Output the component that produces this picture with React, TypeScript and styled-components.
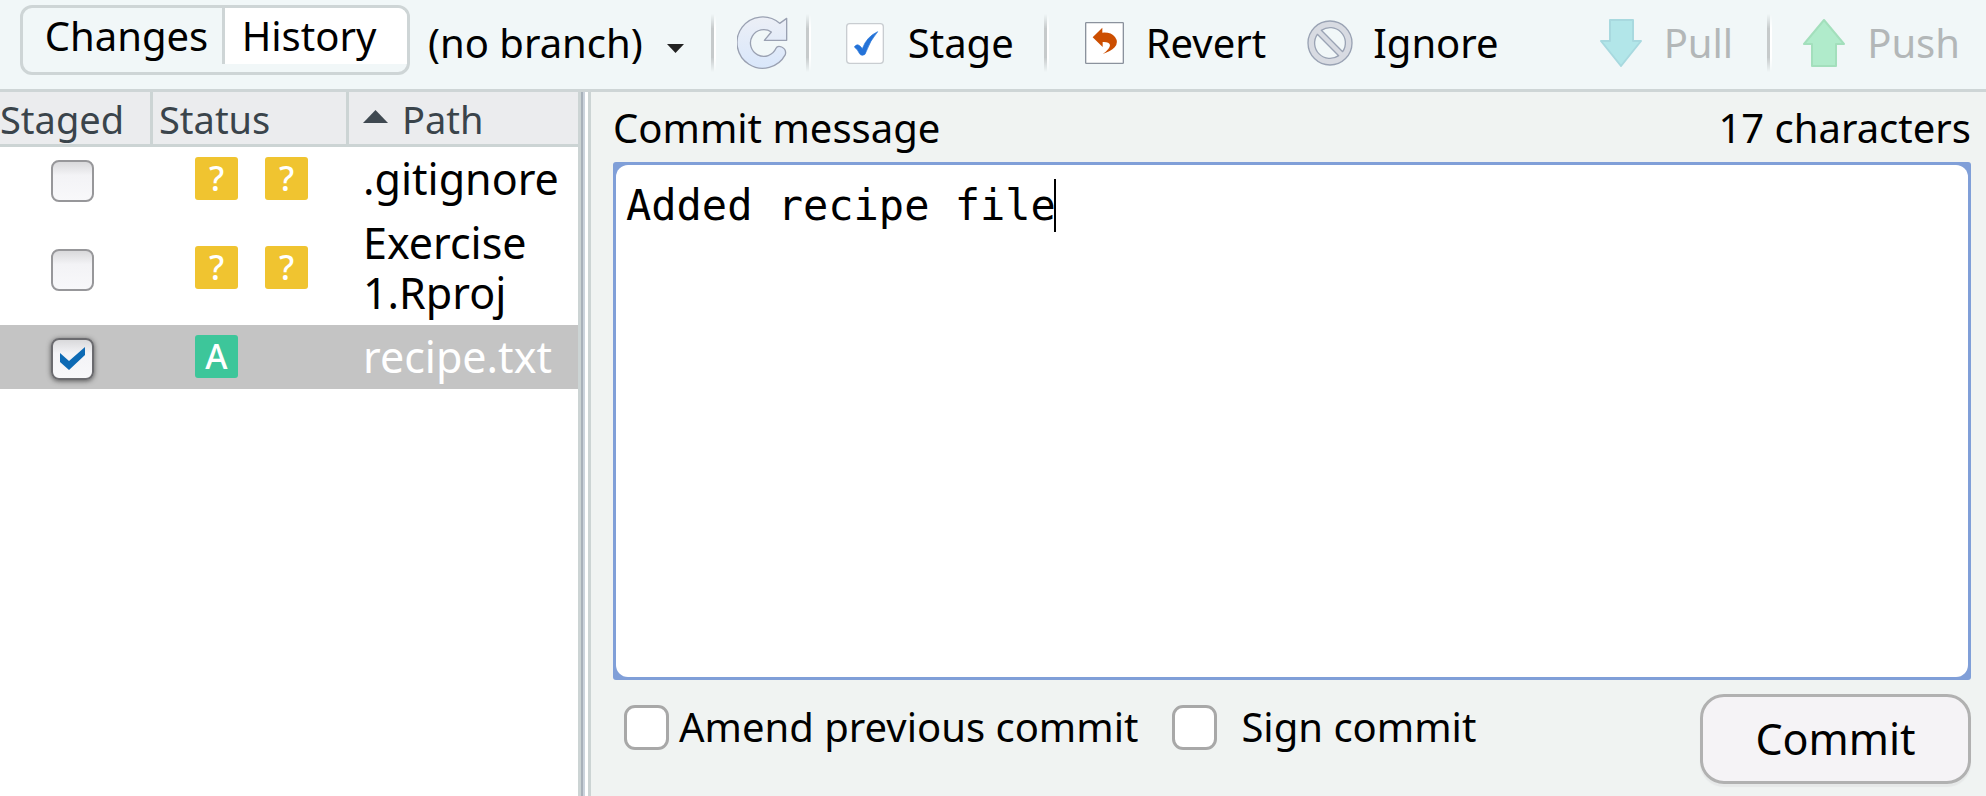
import React, { useState } from "react";
import styled, { createGlobalStyle, css } from "styled-components";

const GlobalStyle = createGlobalStyle`
  *, *::before, *::after { box-sizing: border-box; }
  body {
    margin: 0;
    background: #f0f3f2;
    color: #000;
    font-family: "Noto Sans", "Open Sans", sans-serif;
    font-size: 40px;
    line-height: 50px;
  }
  button, input, textarea { font: inherit; color: inherit; margin: 0; }
`;

const Window = styled.div`
  display: flex;
  flex-direction: column;
  min-height: 100vh;
`;

/* Toolbar */

const Toolbar = styled.header`
  display: flex;
  align-items: center;
  height: 92px;
  padding: 0 26px 3px 20px;
  background: #f1f7f8;
  border-bottom: 3px solid #ced5d6;
  white-space: nowrap;
`;

const ViewSwitch = styled.div`
  display: flex;
  align-items: flex-start;
  align-self: flex-start;
  flex: none;
  width: 390px;
  height: 70px;
  margin-top: 5px;
  border: 3px solid #ced5d6;
  border-radius: 12px;
  overflow: hidden;
`;

const ViewButton = styled.button<{ $raised?: boolean }>`
  height: 56px;
  padding: 0 0 0 8px;
  border: 0;
  background: none;
  flex: 0 0 199px;
  ${(p) =>
    p.$raised &&
    css`
      flex: 1;
      padding: 0 14px 0 0;
      background: #fff;
      border-left: 3px solid #ced5d6;
    `}
`;

const ToolButton = styled.button<{ $gap?: number }>`
  display: flex;
  align-items: center;
  gap: ${(p) => p.$gap ?? 24}px;
  flex: none;
  padding: 0;
  border: 0;
  background: none;
  svg { flex: none; display: block; }
  &:disabled { color: #b3b7b8; }
`;

const Separator = styled.span`
  flex: none;
  width: 5px;
  height: 58px;
  background: linear-gradient(90deg, #c6cacb 0 3px, #fff 3px);
  mask-image: linear-gradient(transparent, #000 25%, #000 75%, transparent);
`;

const Gap = styled.span<{ $size: number }>`
  flex: 0 1 ${(p) => p.$size}px;
`;

const Spacer = styled.span`
  flex: 1;
`;

/* Split view */

const Split = styled.main`
  display: flex;
  flex: 1;
`;

const FilePane = styled.section`
  flex: 0 0 578px;
  background: #fff;
`;

const Divider = styled.div`
  flex: 0 0 13px;
  background: linear-gradient(
    90deg,
    #ccd4d4 0 3px,
    #a8b1ba 3px 5px,
    #cbd3dc 5px 7px,
    #fff 7px 10px,
    #ccd4d4 10px
  );
`;

const FileTable = styled.table`
  width: 100%;
  table-layout: fixed;
  border-collapse: separate;
  border-spacing: 0;
`;

const HeadCell = styled.th<{ $width?: number; $indent?: number }>`
  width: ${(p) => (p.$width ? `${p.$width}px` : "auto")};
  height: 55px;
  padding: 2px 0 0 ${(p) => p.$indent ?? 0}px;
  background: #ebecee;
  border-bottom: 3px solid #ccd4d4;
  border-right: ${(p) => (p.$width ? "3px solid #ccd4d4" : "0")};
  color: #3a444b;
  font-size: 38px;
  font-weight: 400;
  text-align: left;
  white-space: nowrap;
  svg { margin-right: 14px; vertical-align: 11px; }
`;

const FileRow = styled.tr<{ $selected: boolean }>`
  font-size: 43px;
  ${(p) => p.$selected && "background: #c4c4c4; color: #fff;"}
`;

const Cell = styled.td<{ $indent: number }>`
  padding: 7px 0 7px ${(p) => p.$indent}px;
  vertical-align: middle;
`;

const Badges = styled.div`
  display: flex;
  gap: 27px;
  margin-bottom: 2px;
`;

const Badge = styled.span<{ $kind: string }>`
  width: 43px;
  height: 43px;
  border-radius: 3px;
  background: ${(p) => (p.$kind === "A" ? "#3dc69a" : "#f0c430")};
  color: #fff;
  font-size: 34px;
  font-weight: 500;
  line-height: 43px;
  text-align: center;
`;

const StageBox = styled.span`
  position: relative;
  display: block;
  width: 43px;
  height: 42px;
  margin-top: 4px;
  input {
    appearance: none;
    display: block;
    width: 100%;
    height: 100%;
    border: 2px solid #97979a;
    border-radius: 8px;
    background: linear-gradient(#d9d9db, #f3f3f6 35%, #f8f8fa);
  }
  input:checked {
    border-color: #6b6b6f;
    box-shadow: 0 1px 5px #555;
  }
  svg {
    position: absolute;
    inset: 0;
    pointer-events: none;
  }
`;

/* Commit form */

const CommitPane = styled.form`
  display: flex;
  flex-direction: column;
  flex: 1;
  min-width: 0;
  padding: 11px 15px 12px 22px;
`;

const MessageHeader = styled.div`
  display: flex;
  justify-content: space-between;
`;

const MessageFrame = styled.div`
  position: relative;
  display: flex;
  flex: 1;
  margin: 9px 0 14px;
  padding: 3px;
  border-radius: 3px;
  background: #809fd8;
  font-family: "DejaVu Sans Mono", monospace;
  font-size: 42px;
`;

const Message = styled.textarea`
  flex: 1;
  min-height: 200px;
  padding: 16px 10px;
  border: 0;
  border-radius: 12px;
  outline: 0;
  resize: none;
  background: #fff;
  caret-color: transparent;
`;

const Caret = styled.span`
  position: absolute;
  top: 17px;
  width: 2px;
  height: 53px;
  background: #000;
  pointer-events: none;
`;

const Actions = styled.div`
  display: flex;
  align-items: flex-start;
`;

const Option = styled.label<{ $gap: number }>`
  display: flex;
  align-items: center;
  gap: ${(p) => p.$gap}px;
  margin: 8px 23px 0 11px;
  input {
    appearance: none;
    width: 45px;
    height: 45px;
    border: 3px solid #a8a8a8;
    border-radius: 11px;
    background: #fff;
  }
`;

const CommitButton = styled.button`
  width: 271px;
  height: 90px;
  margin-left: auto;
  padding: 0;
  border: 3px solid #b1b1b1;
  border-radius: 24px;
  background: #f5f3f6;
  box-shadow: 0 3px 1px #e6e8e8;
  font-size: 43px;
`;

/* Icons */

const DropGlyph = styled.svg`
  margin-top: 10px;
`;

const DropIcon = () => (
  <DropGlyph width="17" height="9" viewBox="0 0 17 9">
    <path d="M0 0H17L8.500 9Z" fill="#222" />
  </DropGlyph>
);

const SortIcon = () => (
  <svg width="25" height="13" viewBox="0 0 25 13">
    <path d="M12.5 0L25 13H0Z" fill="#3f4951" />
  </svg>
);

const RefreshIcon = () => (
  <svg width="52" height="54" viewBox="50 45 156 162">
    <defs>
      <linearGradient id="refresh" x1="0" y1="0" x2="0" y2="1">
        <stop offset="0" stopColor="#eceff6" />
        <stop offset="1" stopColor="#d9e7fb" />
      </linearGradient>
    </defs>
    <path
      d="M199 52V118H132L153 93A40 40 0 1 0 167 142Q171 133 184 138Q199 145 195 161A77 77 0 1 1 178 67Z"
      fill="url(#refresh)"
      stroke="#9aa1b2"
      strokeWidth="4"
      strokeLinejoin="round"
    />
  </svg>
);

const StageIcon = () => (
  <svg width="38" height="41" viewBox="378 69 114 123">
    <rect x="380" y="71" width="110" height="119" rx="9" fill="#fff" stroke="#c9cdd1" strokeWidth="4" />
    <path
      d="M403 141Q411 129 421 139L427 146Q440 110 473 95Q450 122 438 156Q436 166 427 166Q421 166 418 160Q413 148 403 141Z"
      fill="#2372d8"
      stroke="#2372d8"
      strokeWidth="2"
    />
  </svg>
);

const RevertIcon = () => (
  <svg width="39" height="42" viewBox="74 63 117 126">
    <rect x="76" y="65" width="113" height="122" rx="2" fill="#fff" stroke="#8b929d" strokeWidth="4" />
    <path
      d="M97 109L126 80V95Q152 93 164 108Q176 124 163 139Q151 151 127 159Q149 144 149 132Q147 122 127 123V138Z"
      fill="#cc4e00"
    />
  </svg>
);

const IgnoreIcon = () => (
  <svg width="46" height="46" viewBox="745 62 138 138">
    <g stroke="#9aa3b4" strokeWidth="4" strokeLinejoin="round">
      <circle cx="814" cy="131" r="66" fill="#d8dbe2" />
      <path d="M788 93A46 46 0 0 1 852 157Z" fill="#f1f7f8" />
      <path d="M776 105A46 46 0 0 0 840 169Z" fill="#f1f7f8" />
    </g>
  </svg>
);

const PullIcon = () => (
  <svg width="42" height="48" viewBox="0 0 42 48">
    <path d="M10 1H33V22H41L21 47L1 22H10Z" fill="#b2e6e9" stroke="#a8d9df" strokeWidth="2" strokeLinejoin="round" />
  </svg>
);

const PushIcon = () => (
  <svg width="42" height="48" viewBox="0 0 42 48">
    <path d="M9 47H33V25H41L21 1L1 25H9Z" fill="#b0ebcb" stroke="#a3dfbc" strokeWidth="2" strokeLinejoin="round" />
  </svg>
);

const CheckMark = () => (
  <svg width="43" height="42" viewBox="0 0 43 42">
    <path d="M9 15L18 23L34 9V17L18 32L9 24Z" fill="#0d6ab4" />
  </svg>
);

type FileEntry = { path: string; status: string[]; staged: boolean };

const initialFiles: FileEntry[] = [
  { path: ".gitignore", status: ["?", "?"], staged: false },
  { path: "Exercise 1.Rproj", status: ["?", "?"], staged: false },
  { path: "recipe.txt", status: ["A"], staged: true },
];

export default function App() {
  const [files, setFiles] = useState(initialFiles);
  const [message, setMessage] = useState("Added recipe file");

  const toggle = (path: string) =>
    setFiles(files.map((f) => (f.path === path ? { ...f, staged: !f.staged } : f)));

  return (
    <Window>
      <GlobalStyle />
      <Toolbar>
        <ViewSwitch>
          <ViewButton>Changes</ViewButton>
          <ViewButton $raised>History</ViewButton>
        </ViewSwitch>
        <Gap $size={18} />
        <ToolButton>
          (no branch)
          <DropIcon />
        </ToolButton>
        <Gap $size={27} />
        <Separator />
        <Gap $size={21} />
        <ToolButton aria-label="Refresh">
          <RefreshIcon />
        </ToolButton>
        <Gap $size={17} />
        <Separator />
        <Gap $size={35} />
        <ToolButton>
          <StageIcon />
          Stage
        </ToolButton>
        <Gap $size={30} />
        <Separator />
        <Gap $size={36} />
        <ToolButton $gap={22}>
          <RevertIcon />
          Revert
        </ToolButton>
        <Gap $size={41} />
        <ToolButton $gap={20}>
          <IgnoreIcon />
          Ignore
        </ToolButton>
        <Spacer />
        <ToolButton disabled $gap={22}>
          <PullIcon />
          Pull
        </ToolButton>
        <Gap $size={34} />
        <Separator />
        <Gap $size={31} />
        <ToolButton disabled $gap={22}>
          <PushIcon />
          Push
        </ToolButton>
      </Toolbar>
      <Split>
        <FilePane>
          <FileTable>
            <thead>
              <tr>
                <HeadCell $width={153}>Staged</HeadCell>
                <HeadCell $width={196} $indent={6}>Status</HeadCell>
                <HeadCell $indent={14}>
                  <SortIcon />
                  Path
                </HeadCell>
              </tr>
            </thead>
            <tbody>
              {files.map((file) => (
                <FileRow key={file.path} $selected={file.path === "recipe.txt"}>
                  <Cell $indent={51}>
                    <StageBox>
                      <input
                        type="checkbox"
                        aria-label={`Stage ${file.path}`}
                        checked={file.staged}
                        onChange={() => toggle(file.path)}
                      />
                      {file.staged && <CheckMark />}
                    </StageBox>
                  </Cell>
                  <Cell $indent={42}>
                    <Badges>
                      {file.status.map((s, i) => (
                        <Badge key={i} $kind={s}>{s}</Badge>
                      ))}
                    </Badges>
                  </Cell>
                  <Cell $indent={14}>{file.path}</Cell>
                </FileRow>
              ))}
            </tbody>
          </FileTable>
        </FilePane>
        <Divider />
        <CommitPane onSubmit={(e) => e.preventDefault()}>
          <MessageHeader>
            <label htmlFor="message">Commit message</label>
            <span>{message.length} characters</span>
          </MessageHeader>
          <MessageFrame>
            <Message
              id="message"
              spellCheck={false}
              value={message}
              onChange={(e) => setMessage(e.target.value)}
            />
            <Caret style={{ left: `calc(11px + ${message.length}ch)` }} />
          </MessageFrame>
          <Actions>
            <Option $gap={10}>
              <input type="checkbox" />
              Amend previous commit
            </Option>
            <Option $gap={24}>
              <input type="checkbox" />
              Sign commit
            </Option>
            <CommitButton type="submit">Commit</CommitButton>
          </Actions>
        </CommitPane>
      </Split>
    </Window>
  );
}
